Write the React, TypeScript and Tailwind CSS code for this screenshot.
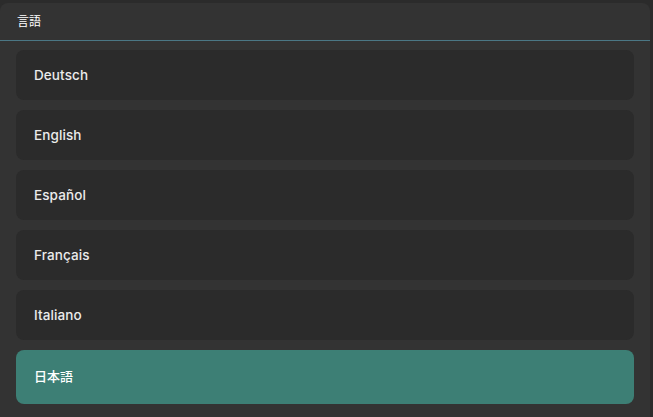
const languages = ["Deutsch", "English", "Español", "Français", "Italiano"];

export default function App() {
  return (
    <div
      className="h-[417px] w-[653px] overflow-hidden bg-[#2b2b2b] pt-[3px]"
      style={{ fontFamily: "Inter, 'Noto Sans CJK JP', sans-serif" }}
    >
      <div className="flex h-[414px] w-[650px] flex-col rounded-t-lg bg-[#333333]">
        {/* header */}
        <div className="flex h-[38px] items-center border-b border-[#4b7785] px-[17px] text-[12px] text-white">
          言語
        </div>
        <div className="flex flex-col gap-[10px] px-4 pt-[9px]">
          {languages.map((lang) => (
            <div
              key={lang}
              className="flex h-[50px] items-center rounded-lg bg-[#2b2b2b] px-[18px] pt-[1px] text-[13.5px] font-medium tracking-[0.1px] text-[#ececec]"
            >
              {lang}
            </div>
          ))}
          <div className="flex h-[54px] items-center rounded-lg bg-[#3d7f75] px-[18px] text-[13px] font-medium text-white">
            日本語
          </div>
        </div>
      </div>
    </div>
  );
}
